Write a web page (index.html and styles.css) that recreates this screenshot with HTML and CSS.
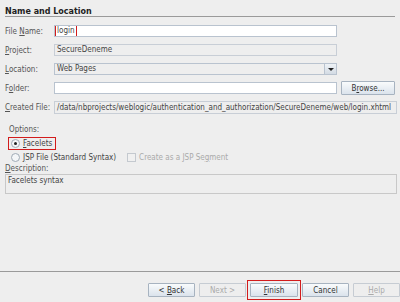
FILE: index.html
```html
<!DOCTYPE html>
<html lang="en">
<head>
  <meta charset="UTF-8" />
  <title>New JSF Page</title>
  <link rel="stylesheet" href="styles.css">
</head>
<body>
  <div class="wizard">
    <div class="content">
      <h1 class="title">Name and Location</h1>

      <div class="form">
        <label class="lbl">File <u>N</u>ame:</label>
        <div class="field"><span class="hl">login</span></div>

        <label class="lbl"><u>P</u>roject:</label>
        <div class="field off">SecureDeneme</div>

        <label class="lbl"><u>L</u>ocation:</label>
        <div class="field combo"><span class="combo-text">Web Pages</span><span class="arrow"></span></div>

        <label class="lbl">F<u>o</u>lder:</label>
        <div class="row-browse">
          <div class="field"></div>
          <button class="btn browse">B<u>r</u>owse...</button>
        </div>

        <label class="lbl"><u>C</u>reated File:</label>
        <div class="field off wide">/data/nbprojects/weblogic/authentication_and_authorization/SecureDeneme/web/login.xhtml</div>
      </div>

      <div class="options">
        <div class="opt-title">Options:</div>
        <div class="radio-row">
          <span class="hlbox"><span class="radio on"></span><span><u>F</u>acelets</span></span>
        </div>
        <div class="radio-row">
          <span class="radio"></span><span><u>J</u>SP File (Standard Syntax)</span>
          <span class="check"></span><span class="dim">Create as a JSP Se<u>g</u>ment</span>
        </div>
        <div class="opt-title desc-title"><u>D</u>escription:</div>
        <div class="desc">Facelets syntax</div>
      </div>
    </div>

    <div class="footer">
      <button class="btn">&lt; <u>B</u>ack</button>
      <button class="btn dim-btn">Next &gt;</button>
      <span class="hlbtn"><button class="btn"><u>F</u>inish</button></span>
      <button class="btn">Cancel</button>
      <button class="btn dim-btn"><u>H</u>elp</button>
    </div>
  </div>
</body>
</html>
```

FILE: styles.css
```css
* { margin: 0; padding: 0; box-sizing: border-box; }
body { font-family: "DejaVu Sans Condensed", "DejaVu Sans", sans-serif; font-size: 8px; color: #444; background: #eeeeee; width: 400px; height: 302px; overflow: hidden; }
u { text-decoration: underline; }

.wizard { display: flex; flex-direction: column; height: 302px; }
.content { flex: 1; padding: 5px 3px 0 5px; }

.title { font-family: "DejaVu Sans", sans-serif; font-size: 8px; line-height: 8px; font-weight: bold; color: #222; padding-top: 3px; border-bottom: 1px solid #9a9a9a; margin-right: 2px; }

.form { display: grid; grid-template-columns: 49px 1fr; row-gap: 7px; align-items: center; margin-top: 8px; }
.lbl { color: #555; white-space: nowrap; }
.field { height: 12px; background: #fff; border: 1px solid #b9c3cf; line-height: 10px; padding-left: 2px; margin-right: 60px; color: #444; white-space: nowrap; overflow: hidden; }
.field.off { background: #eeeeee; border-color: #c8ced6; }
.field.wide { margin-right: 0; height: 13px; line-height: 11px; }
.combo { display: flex; justify-content: space-between; background: #eeeeee; padding-right: 0; }
.arrow { width: 12px; height: 10px; background: linear-gradient(#eef2f6, #d3dbe4); border-left: 1px solid #b9c3cf; position: relative; }
.arrow::after { content: ""; position: absolute; left: 3px; top: 4px; border-left: 3px solid transparent; border-right: 3px solid transparent; border-top: 3px solid #222; }
.hl { display: inline-block; height: 12px; margin-left: -2px; padding: 0 1px; border: 1px solid #d21c1c; line-height: 10px; margin-top: -1px; }

.row-browse { display: flex; align-items: center; gap: 4px; height: 12px; }
.row-browse .field { flex: 1; margin-right: 0; }
.btn { font-family: "DejaVu Sans Condensed", "DejaVu Sans", sans-serif; font-size: 8px; color: #333; height: 14px; border: 1px solid #a7b3c0; border-radius: 1px; background: linear-gradient(#f9fbfc, #dbe3ec); }
.browse { width: 54px; margin-right: 2px; }

.options { padding: 11px 0 0 4px; }
.opt-title { color: #555; margin-bottom: 2px; }
.radio-row { display: flex; align-items: center; height: 14px; margin-left: 2px; gap: 3px; color: #444; }
.hlbox { display: inline-flex; align-items: center; gap: 3px; border: 1px solid #d21c1c; height: 13px; padding: 0 3px 0 2px; margin-left: -3px; }
.radio { width: 9px; height: 9px; border: 1px solid #a0aab5; border-radius: 50%; background: #f4f6f8; display: inline-block; position: relative; }
.radio.on::after { content: ""; position: absolute; left: 2px; top: 2px; width: 3px; height: 3px; border-radius: 50%; background: #222; }
.check { width: 9px; height: 9px; border: 1px solid #c4c9cf; background: #f0f0f0; margin-left: 8px; }
.dim { color: #aaa; }
.desc-title { margin-left: -4px; margin-bottom: 1px; }
.desc { margin-left: -4px; margin-right: 0; height: 20px; border: 1px solid #c8c8c8; padding: 1px 2px; color: #444; }

.footer { height: 31px; border-top: 1px solid #9a9a9a; display: flex; align-items: flex-end; justify-content: flex-end; gap: 4px; padding-bottom: 5px; }
.footer .btn { width: 47px; }
.footer .dim-btn { color: #aaa; background: #eeeeee; border-color: #c6ccd3; }
.hlbtn { border: 1px solid #d21c1c; padding: 2px; display: flex; margin: 0 -3px -3px; }
.hlbtn .btn { width: 48px; }
```
